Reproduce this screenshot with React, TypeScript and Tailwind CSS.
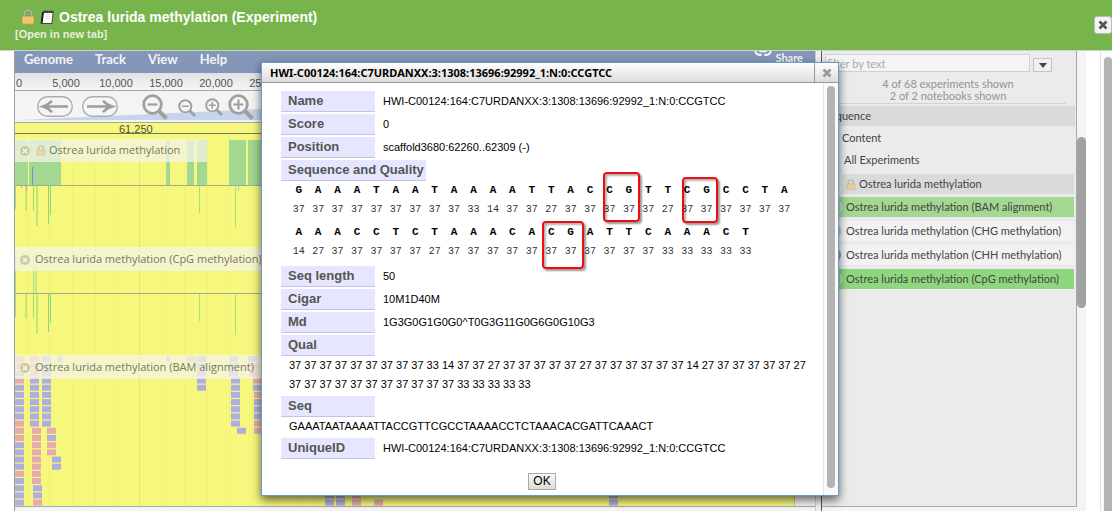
import React from "react";
import { Link2 } from "lucide-react";

type Kind = "p" | "b";
const PINK = "#e6abae";
const BLUE = "#afaee0";
const GREEN = "#a2d891";

const GRID = [12, 34, 57, 80, 102, 147, 169, 192, 214, 237, 259, 282, 304];

const DOWN: { x: number; h: number; c: string; w: number }[] = [
  { x: 0, h: 23, c: "#9fd98c", w: 1 },
  { x: 10, h: 25, c: "#c4e777", w: 2 },
  { x: 18, h: 25, c: "#9fdc74", w: 1 },
  { x: 21, h: 40, c: "#bfe67a", w: 2 },
  { x: 33, h: 38, c: "#8cd67c", w: 1 },
  { x: 35, h: 29, c: "#8fd67c", w: 1 },
  { x: 184, h: 27, c: "#a9e074", w: 1 },
  { x: 220, h: 41, c: "#a9e074", w: 1 },
];

const repeat = (x: number, from: number, kinds: string) =>
  kinds.split("").map((k, i) => ({ x, row: from + i, k: k as Kind }));

const READS = [
  ...repeat(0, 0, "ppbpbbbbbpppbbbbpbbbb"),
  ...repeat(15, 0, "ppp"),
  ...repeat(15, 3, "bbbbbbb"),
  ...repeat(17, 10, "pppppppp"),
  ...repeat(18, 18, "bbp"),
  ...repeat(27, 0, "bbbbbbbbbb"),
  ...repeat(32, 10, "pbpp"),
  ...repeat(37, 14, "bb"),
  ...repeat(182, 0, "bbbbb"),
  ...repeat(172, 0, "p"),
  ...repeat(214, 0, "bbb"),
  ...repeat(216, 3, "bbbbbbb"),
  ...repeat(222, 10, "b"),
  ...repeat(233, 0, "b"),
  ...repeat(235, 1, "pp"),
  ...repeat(238, 3, "pb"),
  ...repeat(239, 5, "pbbbpp"),
  ...repeat(310, 19, "bb"),
  ...repeat(321, 19, "bb"),
  ...repeat(337, 19, "pp"),
  ...repeat(359, 20, "p"),
  ...repeat(594, 19, "bb"),
];

const SEQ = "GAAATAATAAAATTACCGTTCGCCTAAAACCTCTAAACACGATTCAAACT";
const QUALITY = [
  37, 37, 37, 37, 37, 37, 37, 37, 37, 33, 14, 37, 37, 27, 37, 37, 37, 37, 37, 27, 37, 37, 37, 37, 37, 37,
  14, 27, 37, 37, 37, 37, 37, 27, 37, 37, 37, 37, 37, 37, 37, 37, 37, 37, 37, 33, 33, 33, 33, 33,
];

function Lock({ className = "" }: { className?: string }) {
  return (
    <svg viewBox="0 0 14 16" className={className} aria-hidden="true">
      <path d="M3.2 8V5a3.8 3.8 0 0 1 7.6 0v3" fill="none" stroke="#8f8f8f" strokeWidth="2" />
      <path d="M3.2 8V5a3.8 3.8 0 0 1 7.6 0v3" fill="none" stroke="#d9d9d9" strokeWidth=".7" />
      <rect x="1" y="7" width="12" height="8.4" rx="1" fill="#e6b95a" stroke="#b98c3a" strokeWidth=".6" />
      <path d="M1.5 9h11M1.5 11h11M1.5 13h11" stroke="#f6dc97" strokeWidth=".8" />
    </svg>
  );
}

function Notebook() {
  return (
    <svg viewBox="0 0 14 15" className="h-[15px] w-[14px]" aria-hidden="true">
      <path d="M3.4 2h9.8l-1.2 11.5H1.4z" fill="#fff" stroke="#444" strokeWidth="1" />
      <path d="M3.4 1.8h10" stroke="#222" strokeWidth="2.2" strokeDasharray="1.3 .6" />
      <path d="M3 2 1.6 13.5" stroke="#222" strokeWidth="2" />
      <path d="M5.4 4.5h6M5.2 6.5h6M5 8.5h6" stroke="#d8d8d8" strokeWidth=".6" />
    </svg>
  );
}

function Cross({ className = "" }: { className?: string }) {
  return (
    <svg viewBox="0 0 10 10" className={className} aria-hidden="true">
      <path d="M1.5 1.5 8.5 8.5M8.5 1.5 1.5 8.5" stroke="currentColor" strokeWidth="2.8" />
    </svg>
  );
}

function Arrow({ back = false }: { back?: boolean }) {
  return (
    <svg viewBox="0 0 36 21" className="h-[21px] w-9" aria-hidden="true">
      <rect x=".7" y=".7" width="34.6" height="19.6" rx="9.8" fill="#f5f5f5" stroke="#adadad" strokeWidth="1.4" />
      <path
        d={back ? "M31 10.5H7M15 4.8Q11 9 6 10.5 11 12 15 16.2" : "M5 10.5h24M21 4.8Q25 9 30 10.5 25 12 21 16.2"}
        fill="none"
        stroke="#9d9d9d"
        strokeWidth="2.6"
      />
    </svg>
  );
}

function Magnifier({ plus = false, className = "" }: { plus?: boolean; className?: string }) {
  return (
    <svg viewBox="0 0 26 26" className={className} aria-hidden="true">
      <circle cx="10.5" cy="10.5" r="8.8" fill="#f5f5f5" stroke="#a0a0a0" strokeWidth="2.8" />
      <path d="M17 17l7.5 7.5" stroke="#a0a0a0" strokeWidth="4" />
      <path d={plus ? "M5.5 10.5h10M10.5 5.5v10" : "M5.5 10.5h10"} stroke="#a0a0a0" strokeWidth="2.2" />
    </svg>
  );
}

function Grid() {
  return (
    <g>
      {GRID.map((x) => (
        <rect key={x} x={x} width="1" height="100%" fill="#f1f376" />
      ))}
      <rect x="124" width="1" height="100%" fill="#e3e572" />
    </g>
  );
}

function TrackLabel({ text, lock = false, className }: { text: string; lock?: boolean; className: string }) {
  return (
    <div
      className={`absolute left-0 top-0 flex h-[23px] items-center whitespace-nowrap bg-[#f4f4e8]/75 pl-[5px] font-['Open_Sans'] text-[11px] text-[#77785e] ${className}`}
    >
      <button aria-label={`Close ${text}`} className="flex size-[10px] items-center justify-center rounded-full bg-[#c9c9a6] text-[#f4f4d8]">
        <Cross className="size-[6px]" />
      </button>
      {lock && <Lock className="ml-[6px] h-[11px] w-[10px] opacity-50" />}
      <span className={lock ? "ml-[3px]" : "ml-[5px]"}>{text}</span>
    </div>
  );
}

function Browser() {
  return (
    <section className="flex min-w-0 flex-1 flex-col border-l border-[#a0a0a0] bg-[#f4f4f4]">
      <nav className="flex h-[22px] shrink-0 items-center gap-[22px] overflow-hidden bg-[#8497b9] px-[9px] pb-[5px] text-[13px] font-bold text-[#f2f3f6]">
        <button>Genome</button>
        <button>Track</button>
        <button>View</button>
        <button>Help</button>
        <button className="ml-auto flex items-center gap-[3px] pb-0.5 pr-[3px] text-[11px]">
          <Link2 className="-mt-4 size-[18px]" strokeWidth={3} />
          Share
        </button>
      </nav>
      <div className="flex h-[18px] shrink-0 items-center border-b border-[#a8a8a8] bg-linear-to-b from-[#e2e2e2] to-[#f5f5f5] pt-[3px] font-['Liberation_Sans'] text-[11px] text-[#555]">
        <span className="w-[26px] pl-px">0</span>
        {["5,000", "10,000", "15,000", "20,000", "25,000"].map((t) => (
          <span key={t} className="w-[50px] text-center">
            {t}
          </span>
        ))}
      </div>
      <div className="relative h-8 shrink-0 border-b border-[#a8a8a8]">
        <svg className="absolute inset-0 h-full w-full" viewBox="0 0 800 31" preserveAspectRatio="none" aria-hidden="true">
          <path d="M4 29 800-7V29z" fill="#c6d4ec" />
        </svg>
        <div className="relative flex h-full items-center pl-[22px]">
          <button aria-label="Pan left">
            <Arrow back />
          </button>
          <button aria-label="Pan right" className="ml-[9px]">
            <Arrow />
          </button>
          <button aria-label="Zoom out far" className="ml-6">
            <Magnifier className="size-[26px]" />
          </button>
          <button aria-label="Zoom out" className="ml-[10px] mt-[3px]">
            <Magnifier className="size-[18px]" />
          </button>
          <button aria-label="Zoom in" className="ml-[9px]">
            <Magnifier plus className="size-[18px]" />
          </button>
          <button aria-label="Zoom in far" className="ml-[5px]">
            <Magnifier plus className="size-[26px]" />
          </button>
        </div>
      </div>
      <div className="flex flex-1 flex-col border-b border-[#aaa]">
        <div className="mr-5 flex flex-1 flex-col border-r border-[#eec260] bg-[#f6f87e]">
          <div className="h-[11px] border-b border-[#77775a] pl-[104px] font-['Liberation_Sans'] text-[11px] leading-[12px] text-[#4c4c4c]">
            61,250
          </div>
          <div className="relative mt-[5px] h-[108px]">
            <svg className="absolute inset-0 h-full w-full" aria-hidden="true">
              <Grid />
              {[[0, 13], [14, 32], [151, 4], [172, 7], [182, 10], [214, 17], [233, 40]].map(([x, w]) => (
                <rect key={x} x={x} y="1" width={w} height="45" fill={GREEN} />
              ))}
              <rect x="17" y="28" width="1" height="18" fill="#7f86e0" />
              {DOWN.map((l) => (
                <rect key={l.x} x={l.x} y="47" width={l.w} height={l.h} fill={l.c} />
              ))}
              <rect x="6" y="47" width="1" height="2" fill="#b79ad0" />
              <rect x="11" y="47" width="1" height="5" fill="#c5a3c4" />
              <rect x="223" y="47" width="1" height="5" fill="#8be3c0" />
              <rect y="46" width="100%" height="1" fill="#a9a98c" />
            </svg>
            <TrackLabel lock text="Ostrea lurida methylation" className="w-48" />
          </div>
          <div className="relative h-[108px] border-t border-[#f6f6c8]">
            <svg className="absolute inset-0 h-full w-full" aria-hidden="true">
              <Grid />
              <rect y="8" width="1" height="37" fill={GREEN} />
              <rect x="18" y="8" width="1" height="37" fill={GREEN} />
              <rect x="20" y="4" width="2" height="41" fill="#c4e777" />
              {DOWN.map((l) => (
                <rect key={l.x} x={l.x} y="46" width={l.w} height={l.h} fill={l.c} />
              ))}
              <rect y="45" width="100%" height="1" fill="#a9a98c" />
            </svg>
            <TrackLabel text="Ostrea lurida methylation (CpG methylation)" className="w-[300px]" />
          </div>
          <div className="relative min-h-[150px] flex-1 overflow-hidden border-t border-[#f6f6c8]">
            <svg className="absolute inset-0 h-full w-full" aria-hidden="true">
              <Grid />
              {READS.map((r, i) => (
                <rect key={i} x={r.x} y={r.row * 7.18} width="9" height="6" fill={r.k === "p" ? PINK : BLUE} />
              ))}
              <rect x="43" width="4" height="6" fill={BLUE} />
              <rect x="151" width="4" height="6" fill={BLUE} />
            </svg>
            <TrackLabel text="Ostrea lurida methylation (BAM alignment)" className="w-[300px]" />
          </div>
        </div>
      </div>
      <div className="h-1 shrink-0 bg-[#f5f5f5]" />
    </section>
  );
}

const TRACKS = [
  { t: "BAM alignment", bg: "bg-[#a2d892]", dot: "bg-[#a2d892]" },
  { t: "CHG methylation", bg: "bg-[#f2f2f2]", dot: "bg-[#a3d9c4]" },
  { t: "CHH methylation", bg: "bg-[#f2f2f2]", dot: "bg-[#9a8ad6]" },
  { t: "CpG methylation", bg: "bg-[#8fd77f]", dot: "bg-[#8fd77f]" },
];

function Sidebar() {
  return (
    <aside className="flex w-[256px] shrink-0 flex-col border-l border-[#555] bg-[#ebebeb] text-[11px] text-[#444]">
      <div className="flex flex-1 flex-col border-b border-r border-r-[#a8a8a8] border-b-[#aaa]">
        <div className="flex items-start gap-[3px] pl-[3px] pt-[3px]">
          <input
            aria-label="Filter by text"
            placeholder="filter by text"
            className="h-[18px] w-[205px] border border-[#d0d0d0] bg-[#f4f4f4] px-px text-[11px] outline-none placeholder:text-[#aaa]"
          />
          <button aria-label="Filter options" className="mt-1 flex h-[14px] w-[19px] items-center justify-center border border-[#c4c4c4] bg-[#f0f0f0]">
            <svg viewBox="0 0 8 5" className="h-[5px] w-2" aria-hidden="true">
              <path d="M0 0h8L4 5z" fill="#444" />
            </svg>
          </button>
        </div>
        <p className="mr-[10px] mt-[6px] border-b border-[#d2d2d2] pb-px pl-2 text-center leading-[12px] text-[#949494]">
          4 of 68 experiments shown
          <br />2 of 2 notebooks shown
        </p>
        <div className="mr-px mt-[2px] h-5 bg-[#dadada] pl-0.5 leading-5">Sequence</div>
        <div className="mt-[2px] h-5 pl-5 leading-5">Content</div>
        <div className="mt-[2px] h-5 pl-[22px] leading-5">All Experiments</div>
        <div className="ml-5 mr-[2px] mt-1 flex h-5 items-center gap-[3px] bg-[#dadada] pl-1">
          <Lock className="h-[11px] w-[10px] opacity-60" />
          Ostrea lurida methylation
        </div>
        <ul className="mt-[3px] flex flex-col gap-1">
          {TRACKS.map((t) => (
            <li key={t.t} className={`mr-[2px] flex h-5 items-center gap-1 whitespace-nowrap pl-1 ${t.bg}`}>
              <span className={`size-4 shrink-0 rounded-full border border-[#f0f0f0] ${t.dot}`} />
              Ostrea lurida methylation ({t.t})
            </li>
          ))}
        </ul>
      </div>
      <div className="h-1 bg-[#f5f5f5]" />
    </aside>
  );
}

function Label({ children, wide = false }: { children: React.ReactNode; wide?: boolean }) {
  return (
    <dt
      className={`h-[21px] shrink-0 border-b border-[#c3c4e4] bg-[#e6e7fe] pl-[7px] text-[13px] font-bold leading-[20px] text-[#555] ${
        wide ? "w-[145px]" : "w-[94px]"
      }`}
    >
      {children}
    </dt>
  );
}

function Row({ label, value, wide }: { label: string; value?: string; wide?: boolean }) {
  return (
    <div className="mb-[2px] flex h-[21px]">
      <Label wide={wide}>{label}</Label>
      {value && <dd className="pl-2 leading-[20px]">{value}</dd>}
    </div>
  );
}

function Bases({ from, to }: { from: number; to: number }) {
  return (
    <div className="grid w-[505px] grid-cols-[repeat(26,minmax(0,1fr))] text-center font-['Liberation_Mono'] leading-[19px]">
      {SEQ.slice(from, to)
        .split("")
        .map((b, i) => (
          <div key={i}>
            <div className="text-[11px] font-bold">{b}</div>
            <div className="text-[10px] text-[#333]">{QUALITY[from + i]}</div>
          </div>
        ))}
    </div>
  );
}

function Dialog() {
  const id = "HWI-C00124:164:C7URDANXX:3:1308:13696:92992_1:N:0:CCGTCC";
  const mark = "absolute rounded-[4px] border-2 border-[#ee0c0c] shadow-[2px_2px_2px_rgba(0,0,0,.4),inset_2px_2px_2px_rgba(0,0,0,.3)]";
  return (
    <div
      role="dialog"
      aria-label={id}
      className="absolute left-[261px] top-[62px] w-[578px] border border-[#6a9bc8] bg-white text-black shadow-[0_4px_9px_rgba(0,0,0,.6)]"
    >
      <header className="flex h-5 items-stretch border-b border-[#999] bg-linear-to-b from-white to-[#dcdcdc]">
        <h2 className="flex-1 pl-2 font-['Noto_Sans'] text-[11px] font-bold leading-[20px]">{id}</h2>
        <button aria-label="Close" className="flex w-6 items-center justify-center border-l border-[#999] text-[#999]">
          <Cross className="size-[10px]" />
        </button>
      </header>
      <div className="flex">
        <div className="flex-1 pl-[19px] pt-[8px] font-['Liberation_Sans'] text-[11px]">
          <dl>
            <Row label="Name" value={id} />
            <Row label="Score" value="0" />
            <Row label="Position" value="scaffold3680:62260..62309 (-)" />
            <Row wide label="Sequence and Quality" />
            <dd className="relative mb-[5px] -mt-[2px] flex flex-col gap-1 pl-2">
              <Bases from={0} to={26} />
              <Bases from={26} to={50} />
              <span className={`${mark} -top-[9px] left-[322px] h-[50px] w-[37px]`} />
              <span className={`${mark} -top-[4px] left-[401px] h-[46px] w-[36px]`} />
              <span className={`${mark} left-[261px] top-[40px] h-[48px] w-[42px]`} />
            </dd>
            <Row label="Seq length" value="50" />
            <Row label="Cigar" value="10M1D40M" />
            <Row label="Md" value="1G3G0G1G0G0^T0G3G11G0G6G0G10G3" />
            <Row label="Qual" />
            <dd className="-mt-[2px] whitespace-nowrap pl-2 leading-[19px]">
              {QUALITY.slice(0, 34).join(" ")}
              <br />
              {QUALITY.slice(34).join(" ")}
            </dd>
            <div className="mt-[2px]">
              <Row label="Seq" />
            </div>
            <dd className="-mt-[2px] mb-[2px] pl-2 leading-[19px]">{SEQ}</dd>
            <Row label="UniqueID" value={id} />
          </dl>
          <div className="mb-[5px] mt-[14px] flex justify-center pr-[20px]">
            <button className="h-[17px] w-7 border border-[#aaa] bg-linear-to-b from-[#f8f8f8] to-[#dcdcdc] text-[12px] leading-[15px]">OK</button>
          </div>
        </div>
        <div className="flex w-[15px] flex-col border-l border-[#e4e4e4] bg-[#fafafa] pb-[7px] pl-[3px] pt-[3px]">
          <div className="w-2 flex-1 rounded-full bg-[#b4b4b4]" />
        </div>
      </div>
    </div>
  );
}

export default function App() {
  return (
    <div className="relative flex h-screen flex-col overflow-hidden bg-white font-['Lato',sans-serif]">
      <header className="flex h-[51px] shrink-0 items-center border-b border-[#cfcfcf] bg-[#77b44c] font-['Liberation_Sans'] text-white">
        <div className="flex-1 pl-[15px]">
          <h1 className="flex items-center pl-[6px] text-[14px] font-bold leading-[18px]">
            <Lock className="h-4 w-[14px]" />
            <span className="mx-[5px]">
              <Notebook />
            </span>
            Ostrea lurida methylation (Experiment)
          </h1>
          <a href="#new" className="block text-[11px] font-bold leading-[16px] text-[#e6f0dd]">
            [Open in new tab]
          </a>
        </div>
        <button aria-label="Close window" className="flex size-[18px] items-center justify-center rounded-[3px] border border-[#bbb] bg-[#f3f3f3] text-[#555]">
          <Cross className="size-[10px]" />
        </button>
      </header>
      <main className="flex min-h-0 flex-1 pl-[14px]">
        <Browser />
        <div className="w-[6px] shrink-0 border-l border-[#ccc] bg-[#f0f0f0]" />
        <Sidebar />
        <div className="flex w-[9px] shrink-0 flex-col bg-[#f4f4f4] pt-[86px]">
          <div className="h-[171px] rounded-full bg-[#a2a2a2]" />
        </div>
        <div className="w-[14px] shrink-0" />
        <div className="flex w-3 shrink-0 flex-col border-l border-[#e2e2e2] bg-[#fafafa] pl-[3px] pt-[6px]">
          <div className="flex-1 rounded-t-full bg-[#b4b4b4]" />
        </div>
      </main>
      <Dialog />
    </div>
  );
}
